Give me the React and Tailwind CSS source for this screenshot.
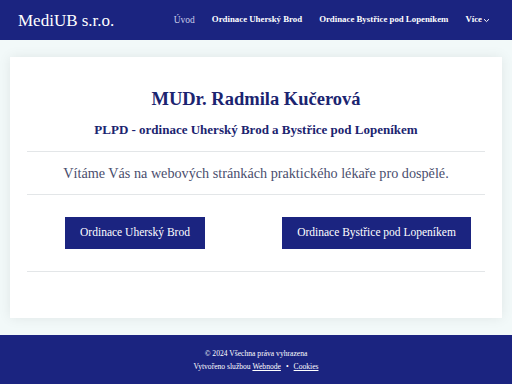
export default function App() {
  const serif = { fontFamily: '"Liberation Serif", "DejaVu Serif", serif' };
  return (
    <div className="min-h-[384px] bg-[#f2f9f9] flex flex-col" style={serif}>
      <header className="h-[40px] bg-[#1b2480] flex items-center pl-[18px] pr-[22px]">
        <div className="text-[17px] text-white leading-none">MediUB s.r.o.</div>
        <nav className="ml-auto flex items-center gap-[17px] text-[8.8px] font-bold text-white">
          <span className="text-[#c9cdea] font-normal text-[9.5px]">Úvod</span>
          <span>Ordinace Uherský Brod</span>
          <span>Ordinace Bystřice pod Lopeníkem</span>
          <span className="flex items-center">
            Více
            <svg width="7" height="5" viewBox="0 0 7 5" className="ml-[1px]">
              <path d="M1 1.2 L3.5 3.6 L6 1.2" stroke="white" strokeWidth="1" fill="none" />
            </svg>
          </span>
        </nav>
      </header>

      <main className="px-[10px] pt-[17px] pb-[17px]">
        <div className="bg-white shadow-[0_0_12px_rgba(0,0,0,0.08)] h-[261px] px-[17px] pt-[28px]">
          <h1 className="text-center text-[18.5px] font-bold text-[#1b2470] leading-[28px]">
            MUDr. Radmila Kučerová
          </h1>
          <h2 className="text-center text-[13px] font-bold text-[#1b2470] mt-[8px] leading-[18px]">
            PLPD - ordinace Uherský Brod a Bystřice pod Lopeníkem
          </h2>
          <div className="border-t border-[#e3e6e8] mt-[12px]" />
          <p className="text-center text-[14.2px] text-[#4a4e6e] py-[11px] leading-[20px]">
            Vítáme Vás na webových stránkách praktického lékaře pro dospělé.
          </p>
          <div className="border-t border-[#e3e6e8]" />
          <div className="flex justify-between pt-[22px] pl-[38px] pr-[14px]">
            <button className="bg-[#1b2480] text-white text-[11.5px] h-[32px] w-[140px]">
              Ordinace Uherský Brod
            </button>
            <button className="bg-[#1b2480] text-white text-[11.5px] h-[32px] w-[189px]">
              Ordinace Bystřice pod Lopeníkem
            </button>
          </div>
          <div className="border-t border-[#e3e6e8] mt-[22px]" />
        </div>
      </main>

      <footer className="bg-[#1b2480] flex-1 min-h-[49px] flex flex-col items-center pt-[12px] text-[7.6px] text-white leading-[13px]">
        <div>© 2024 Všechna práva vyhrazena</div>
        <div>
          Vytvořeno službou <span className="underline">Webnode</span>
          <span className="mx-[5px]">•</span>
          <span className="underline">Cookies</span>
        </div>
      </footer>
    </div>
  );
}
